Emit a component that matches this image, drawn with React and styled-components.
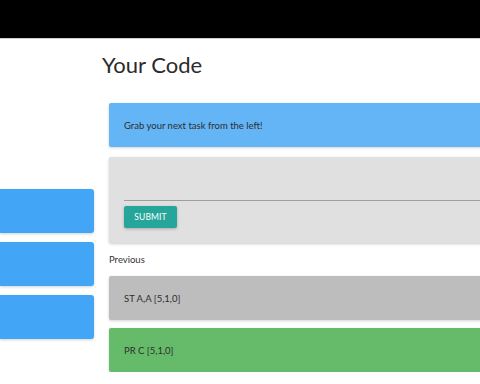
import React from "react";
import styled, { createGlobalStyle } from "styled-components";

const GlobalStyle = createGlobalStyle`
  html, body {
    margin: 0;
    padding: 0;
    background: #ffffff;
    overflow: hidden;
    font-family: "Lato", "Open Sans", sans-serif;
    color: #333333;
  }
`;

const TopBar = styled.header`
  height: 38px;
  background: #000000;
  border-bottom: 1px solid #cfcfcf;
`;

const Main = styled.main`
  display: flex;
  align-items: flex-start;
`;

const TaskList = styled.div`
  width: 94px;
  flex-shrink: 0;
  display: flex;
  flex-direction: column;
  gap: 9px;
  margin-top: 150px;
`;

const TaskCard = styled.div`
  height: 44px;
  background: #42a5f5;
  border-radius: 0 3px 3px 0;
  box-shadow: 0 1px 3px rgba(0, 0, 0, 0.18);
`;

const CodeColumn = styled.section`
  margin-left: 8px;
  width: 420px;
  flex-shrink: 0;
`;

const Title = styled.h1`
  margin: 11px 0 0;
  font-size: 22px;
  line-height: 30px;
  font-weight: 400;
  color: #2b2b2b;
`;

const Body = styled.div`
  margin: 23px 0 0 7px;
  width: 420px;
`;

const Card = styled.div`
  background: ${p => p.$bg};
  min-height: 44px;
  padding: 0 15px;
  display: flex;
  align-items: center;
  font-size: 9.5px;
  color: #2e2e2e;
  border-radius: 2px;
  box-shadow: 0 1px 3px rgba(0, 0, 0, 0.18);
  margin-bottom: ${p => p.$gap || 0}px;
`;

const FormCard = styled.div`
  background: #e0e0e0;
  height: 86px;
  padding: 0 15px;
  box-sizing: border-box;
  border-radius: 2px;
  box-shadow: 0 1px 3px rgba(0, 0, 0, 0.2);
  display: flex;
  flex-direction: column;
`;

const CodeInput = styled.div`
  margin-top: 43px;
  border-bottom: 1px solid #9e9e9e;
  height: 0;
`;

const SubmitButton = styled.button`
  margin-top: 5px;
  align-self: flex-start;
  width: 53px;
  height: 22px;
  padding: 0;
  border: none;
  border-radius: 2px;
  background: #26a69a;
  color: #ffffff;
  font-family: inherit;
  font-size: 8.5px;
  letter-spacing: 0.1px;
  box-shadow: 0 1px 3px rgba(0, 0, 0, 0.25);
`;

const SectionLabel = styled.div`
  font-size: 9.5px;
  color: #333333;
  margin: 11px 0 10px 0;
  line-height: 12px;
`;

export default function App() {
  return (
    <>
      <GlobalStyle />
      <TopBar />
      <Main>
        <TaskList>
          <TaskCard />
          <TaskCard />
          <TaskCard />
        </TaskList>
        <CodeColumn>
          <Title>Your Code</Title>
          <Body>
            <Card $bg="#64b5f6" $gap={10}>Grab your next task from the left!</Card>
            <FormCard>
              <CodeInput />
              <SubmitButton>SUBMIT</SubmitButton>
            </FormCard>
            <SectionLabel>Previous</SectionLabel>
            <Card $bg="#bdbdbd" $gap={8}>ST A,A [5,1,0]</Card>
            <Card $bg="#66bb6a">PR C [5,1,0]</Card>
          </Body>
        </CodeColumn>
      </Main>
    </>
  );
}
